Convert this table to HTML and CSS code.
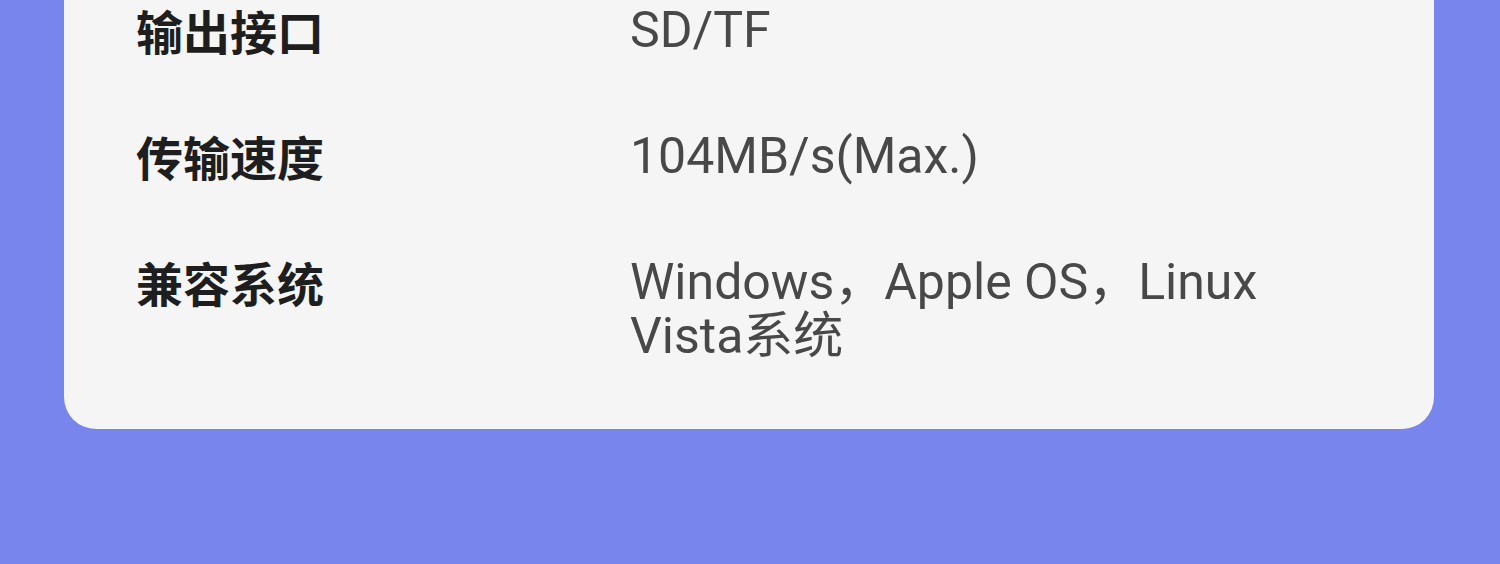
FILE: index.html
```html
<!DOCTYPE html>
<html lang="zh-CN">

<head>
    <meta charset="UTF-8">
    <meta name="viewport" content="width=device-width, initial-scale=1.0">
    <title>产品参数</title>
    <link rel="stylesheet" href="styles.css">
</head>

<body>
    <div class="card">
        <div class="row">
            <div class="label">输出接口</div>
            <div class="value">SD/TF</div>
        </div>
        <div class="row">
            <div class="label">传输速度</div>
            <div class="value">104MB/s(Max.)</div>
        </div>
        <div class="row">
            <div class="label">兼容系统</div>
            <div class="value">Windows，Apple OS，Linux Vista系统</div>
        </div>
    </div>
</body>

</html>
```

FILE: styles.css
```css
body{
    margin: 0;
    height: 100vh;
    background-color: #7885ec;
}
.card{
    background-color: #f5f5f5;
    margin: 0 66px 0 64px;
    padding: 3px 72px 66px 72px;
    border-radius: 0 0 32px 32px;
    display: flex;
    flex-direction: column;
    gap: 72px;
}
.row{
    display: flex;
}
.label{
    width: 494px;
    flex-shrink: 0;
    font-family: "Noto Sans CJK SC", sans-serif;
    font-weight: bold;
    font-size: 47px;
    line-height: 54px;
    color: #1e1e1e;
}
.value{
    width: 660px;
    font-family: Roboto, "Noto Sans CJK SC", sans-serif;
    font-size: 50px;
    line-height: 54px;
    color: #484848;
}
```
